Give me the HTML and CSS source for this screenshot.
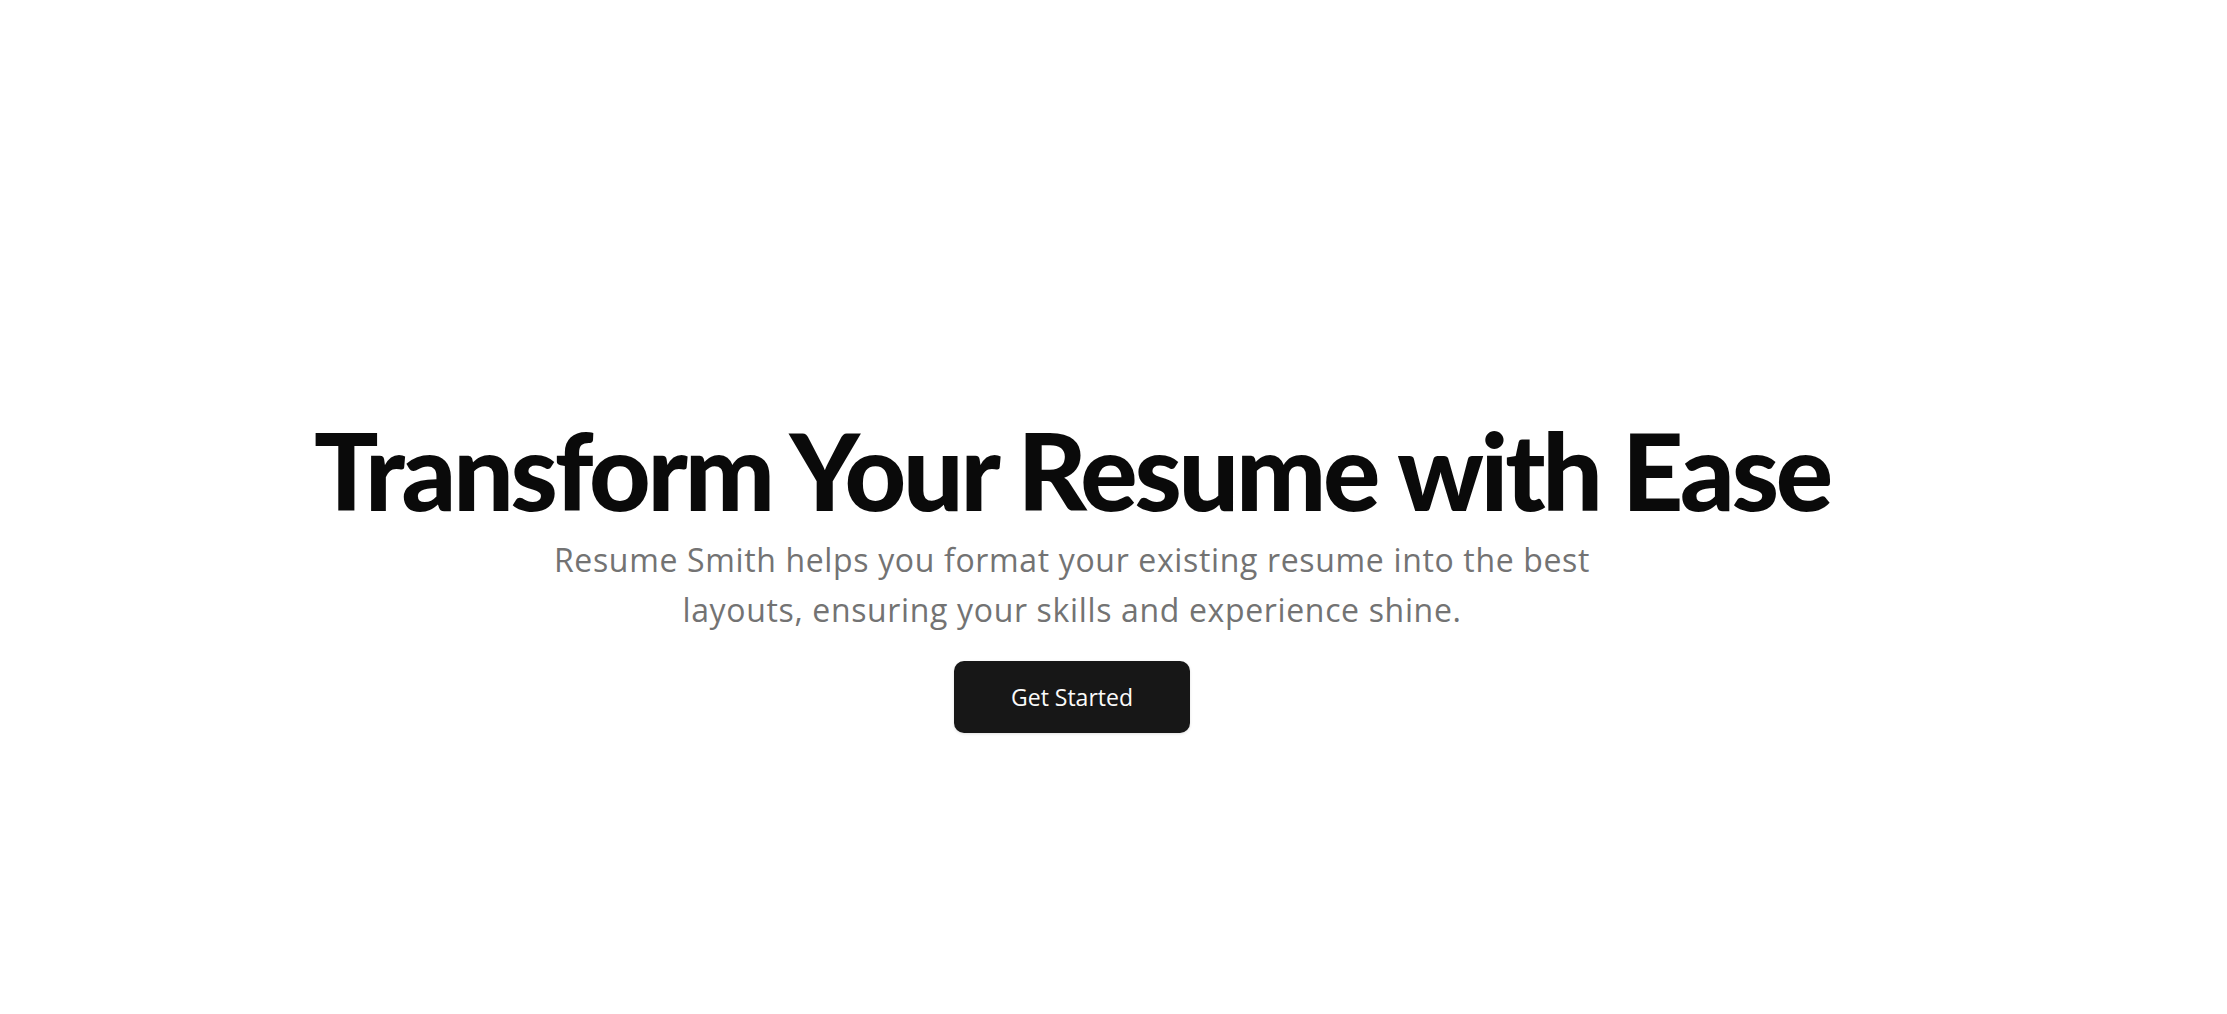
FILE: index.html
```html
<!DOCTYPE html>
<html lang="en">
<head>
<meta charset="utf-8">
<title>Resume Smith</title>
<link rel="stylesheet" href="styles.css">
</head>
<body>
<main class="page">
  <section class="hero">
    <h1 class="hero-title">Transform Your Resume with Ease</h1>
    <p class="hero-text">Resume Smith helps you format your existing resume into the best layouts, ensuring your skills and experience shine.</p>
    <a class="hero-button" href="#">Get Started</a>
  </section>
</main>
</body>
</html>
```
FILE: styles.css
```css
* { box-sizing: border-box; }
html, body { margin: 0; padding: 0; background: #ffffff; }
body {
  font-family: "Open Sans", "Noto Sans", "Liberation Sans", sans-serif;
  color: #0a0a0a;
}
.page {
  min-height: 1014px;
  padding-right: 83px;
  display: flex;
  flex-direction: column;
  align-items: center;
}
.hero {
  padding-top: 416px;
  display: flex;
  flex-direction: column;
  align-items: center;
  text-align: center;
}
.hero-title {
  margin: 0;
  font-family: "Lato", "Open Sans", sans-serif;
  font-size: 107px;
  line-height: 107px;
  font-weight: 900;
  letter-spacing: -0.03em;
  color: #0a0a0a;
  white-space: nowrap;
}
.hero-text {
  margin: 12px 0 0;
  width: 1060px;
  font-size: 32px;
  line-height: 50px;
  letter-spacing: 0.65px;
  color: #737373;
}
.hero-button {
  margin-top: 26px;
  width: 236px;
  height: 72px;
  display: flex;
  align-items: center;
  justify-content: center;
  background: #171717;
  color: #fafafa;
  border-radius: 10px;
  font-size: 23px;
  text-decoration: none;
  box-shadow: 0 1px 3px rgba(0,0,0,0.12);
}
```
